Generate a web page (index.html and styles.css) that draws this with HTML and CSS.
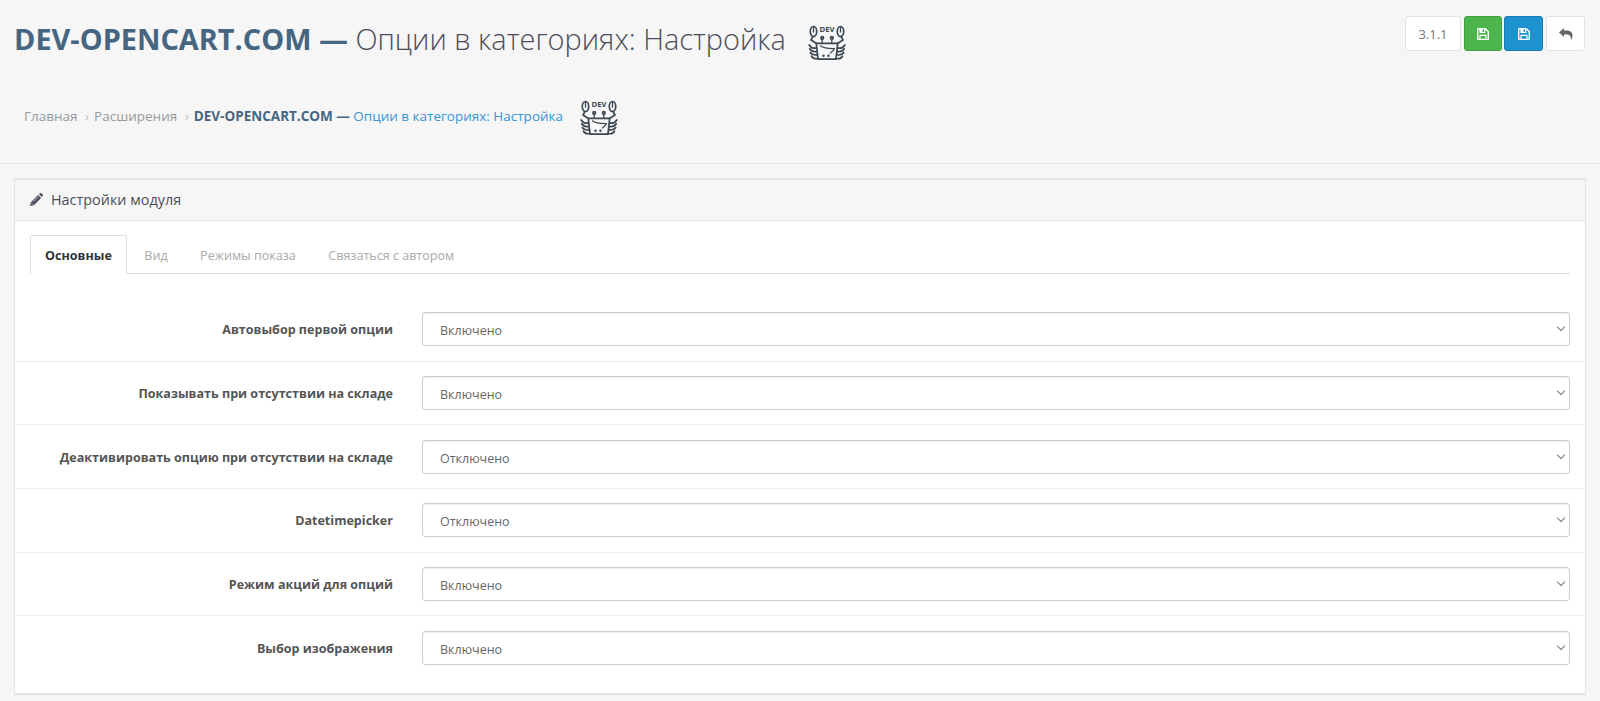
FILE: index.html
```html
<!DOCTYPE html>
<html lang="ru">
<head>
  <meta charset="UTF-8">
  <title>Опции в категориях: Настройка</title>
  <link rel="stylesheet" href="styles.css">
</head>
<body>
  <div class="page-header">
    <div class="title-row">
      <h1><b>DEV-OPENCART.COM —</b> Опции в категориях: Настройка</h1>
      <svg class="crab" viewBox="0 0 38 36">
        <g id="crab">
          <g fill="none" stroke="#3c4850" stroke-width="1.7" stroke-linecap="round" stroke-linejoin="round">
            <ellipse cx="5.500" cy="6.500" rx="3.200" ry="5"/>
            <ellipse cx="32.500" cy="6.500" rx="3.200" ry="5"/>
            <path d="M5.500 2v5M32.500 2v5" stroke-width="1.300"/>
            <path d="M5 11.500 3 15 8.500 18.500M33 11.500 35 15 29.500 18.500"/>
            <path d="M8.300 18.400H29.700L28 34.200H10z"/>
            <path d="M14.200 18V14.500M23.800 18V14.500" stroke-width="1.300"/>
            <circle cx="14.200" cy="13" r="1.300"/>
            <circle cx="23.800" cy="13" r="1.300"/>
            <path d="M8.500 23Q3.500 24 1.200 20M9 26.300Q4 27.500 1.800 23.800M9.300 29.600Q5 31 2.300 27.600M10 33.500Q5.500 34.500 3.500 31.200"/>
            <path d="M29.500 23Q34.500 24 36.800 20M29 26.300Q34 27.500 36.200 23.800M28.700 29.600Q33 31 35.700 27.600M28 33.500Q32.500 34.500 34.500 31.200"/>
            <path d="M12.500 20.800Q16 23.800 26.500 23.600Q25.500 26 22.500 28" stroke-width="1.200"/>
          </g>
          <circle cx="15.500" cy="30.700" r="1.200" fill="#3c4850"/>
          <circle cx="20.500" cy="30.700" r="1.200" fill="#3c4850"/>
          <text x="19" y="7.200" text-anchor="middle" textLength="15" lengthAdjust="spacingAndGlyphs" font-size="7" font-weight="700" fill="#3c4850">DEV</text>
        </g>
      </svg>
      <div class="buttons">
        <a class="btn version">3.1.1</a>
        <button class="btn btn-success">
          <svg class="icon" viewBox="0 0 12 12"><path id="save" fill="#fff" fill-rule="evenodd" d="M1 0H8.500L12 3.300V11a1 1 0 0 1-1 1H1a1 1 0 0 1-1-1V1A1 1 0 0 1 1 0zM1.400 1.300V10.700H2.400V7.300a.6.6 0 0 1 .6-.6H9a.6.6 0 0 1 .6.6V10.700H10.600V4L8.300 1.500V4.400a.6.6 0 0 1-.6.6H3a.6.6 0 0 1-.6-.6V1.300zM5.500 1.200V3.900H7V1.200zM3.600 8.100V10.700H8.400V8.100z"/></svg>
        </button>
        <button class="btn btn-primary"><svg class="icon" viewBox="0 0 12 12"><use href="#save"/></svg></button>
        <a class="btn btn-back"><svg class="icon reply" viewBox="0 0 14 12"><path fill="#666" d="M5 0V2.500H7.500C12 2.500 13.500 5 13.500 7.500 13.500 9.300 12.700 11 12 12 12.200 8 10.500 6.500 7.500 6.500H5V9L0 4.500z"/></svg></a>
      </div>
    </div>
    <div class="breadcrumb">
      <a>Главная</a><i>›</i><a>Расширения</a><i>›</i><a class="current"><b>DEV-OPENCART.COM —</b> Опции в категориях: Настройка</a>
      <svg class="crab" viewBox="0 0 38 36"><use href="#crab"/></svg>
    </div>
  </div>

  <div class="panel">
    <div class="panel-heading">
      <svg class="pencil" viewBox="0 0 12 12"><path fill="#4c4d5a" d="M8.300 1.100 9.200.3Q9.900-.3 10.600.3L11.700 1.400Q12.300 2.100 11.700 2.800L10.900 3.700zM7.500 1.800 10.200 4.500 3.500 11.200 0 12 .8 8.500z"/><path d="M1.300 9.300 2.700 10.700M3 8 7.500 3.500" stroke="#f6f6f6" stroke-width=".6"/></svg>
      <h3>Настройки модуля</h3>
    </div>
    <div class="panel-body">
      <ul class="tabs">
        <li class="active">Основные</li>
        <li>Вид</li>
        <li>Режимы показа</li>
        <li>Связаться с автором</li>
      </ul>
      <form>
        <div class="form-group">
          <label>Автовыбор первой опции</label>
          <div class="field"><select><option>Включено</option><option>Отключено</option></select></div>
        </div>
        <div class="form-group">
          <label>Показывать при отсутствии на складе</label>
          <div class="field"><select><option>Включено</option><option>Отключено</option></select></div>
        </div>
        <div class="form-group">
          <label>Деактивировать опцию при отсутствии на складе</label>
          <div class="field"><select><option>Отключено</option><option>Включено</option></select></div>
        </div>
        <div class="form-group">
          <label>Datetimepicker</label>
          <div class="field"><select><option>Отключено</option><option>Включено</option></select></div>
        </div>
        <div class="form-group">
          <label>Режим акций для опций</label>
          <div class="field"><select><option>Включено</option><option>Отключено</option></select></div>
        </div>
        <div class="form-group">
          <label>Выбор изображения</label>
          <div class="field"><select><option>Включено</option><option>Отключено</option></select></div>
        </div>
      </form>
    </div>
  </div>
</body>
</html>
```
FILE: styles.css
```css
* { box-sizing: border-box; }
body {
  margin: 0;
  height: 701px;
  overflow: hidden;
  background: #f6f6f6;
  color: #666;
  font: 12.55px/20px "Open Sans", sans-serif;
}

.page-header {
  height: 164px;
  padding: 16px 15px 0;
  border-bottom: 1px solid #e9e9e9;
}
.title-row { display: flex; align-items: flex-start; height: 84px; }
h1 {
  margin: 1px 0 0 -1px;
  font-size: 28.9px;
  line-height: 44px;
  font-weight: 300;
  color: #4c4d5a;
  white-space: nowrap;
}
h1 b, .breadcrumb b { font-weight: 700; color: #456581; }
.crab { width: 38px; height: 36px; flex: none; }
.title-row .crab { margin: 9px 0 0 22px; }
.buttons { display: flex; gap: 3px; margin-left: auto; }
.btn {
  display: flex;
  align-items: center;
  justify-content: center;
  width: 39px;
  height: 35px;
  padding: 0;
  border: 1px solid #e2e2e2;
  border-radius: 3px;
  background: #fff;
}
.version { width: 56px; font-size: 13px; color: #777; }
.btn-success { width: 38px; margin-right: -1px; background: #4cb64c; border-color: #409f40; }
.btn-primary { background: #1e91cf; border-color: #197bb0; }
.icon { width: 12px; height: 12px; }
.reply { width: 14px; }

.breadcrumb {
  display: flex;
  align-items: center;
  height: 36px;
  padding-left: 9px;
  font-size: 13.5px;
  line-height: 18px;
  white-space: nowrap;
  color: #999;
}
.breadcrumb a, .breadcrumb i { padding-bottom: 5px; }
.breadcrumb i { font-style: normal; color: #bbb; margin: 0 5px 0 7.5px; }
.breadcrumb .current { color: #3a94d4; }
.breadcrumb .crab { margin-left: 17px; }

.panel {
  height: 517px;
  margin: 14px 14px 0;
  border: 1px solid #e3e3e3;
  border-width: 2px 1px;
  background: #fff;
}
.panel-heading {
  display: flex;
  align-items: center;
  height: 41px;
  padding: 0 0 1px 15px;
  border-bottom: 1px solid #e0e0e0;
  background: #f6f6f6;
}
.pencil { width: 13px; height: 13px; }
h3 { margin: 0 0 0 8px; font-size: 14.4px; font-weight: 400; color: #4c4d5a; }

.tabs {
  display: flex;
  height: 39px;
  margin: 14px 15px 23px;
  padding: 0;
  list-style: none;
  border-bottom: 1px solid #ddd;
}
.tabs li {
  height: 39px;
  padding: 10px 14.5px 8px 14px;
  margin-right: 2px;
  border: 1px solid transparent;
  color: #aaa;
}
.tabs .active {
  background: #fff;
  color: #333;
  font-weight: 700;
  border-color: #ddd #ddd #fff;
  border-radius: 2px 2px 0 0;
}

.form-group {
  display: flex;
  align-items: center;
  height: 63.65px;
  padding-right: 15px;
}
.form-group + .form-group { border-top: 1px solid #ededed; }
label {
  width: 378px;
  margin-right: 29px;
  padding-top: 2px;
  text-align: right;
  font-weight: 700;
  color: #555;
}
.field { position: relative; flex: 1; height: 34px; }
.field::after {
  content: "";
  position: absolute;
  right: 6px;
  top: 12px;
  width: 5px;
  height: 5px;
  border: solid #777;
  border-width: 0 1.5px 1.5px 0;
  transform: rotate(45deg);
  pointer-events: none;
}
select {
  appearance: none;
  width: 100%;
  height: 34px;
  padding: 3px 17px 0;
  border: 1px solid #ccc;
  border-radius: 3px;
  background: #fff;
  box-shadow: inset 0 1px 1px rgba(0,0,0,.075);
  color: #666;
  font: 12.5px "Open Sans", sans-serif;
}
```
